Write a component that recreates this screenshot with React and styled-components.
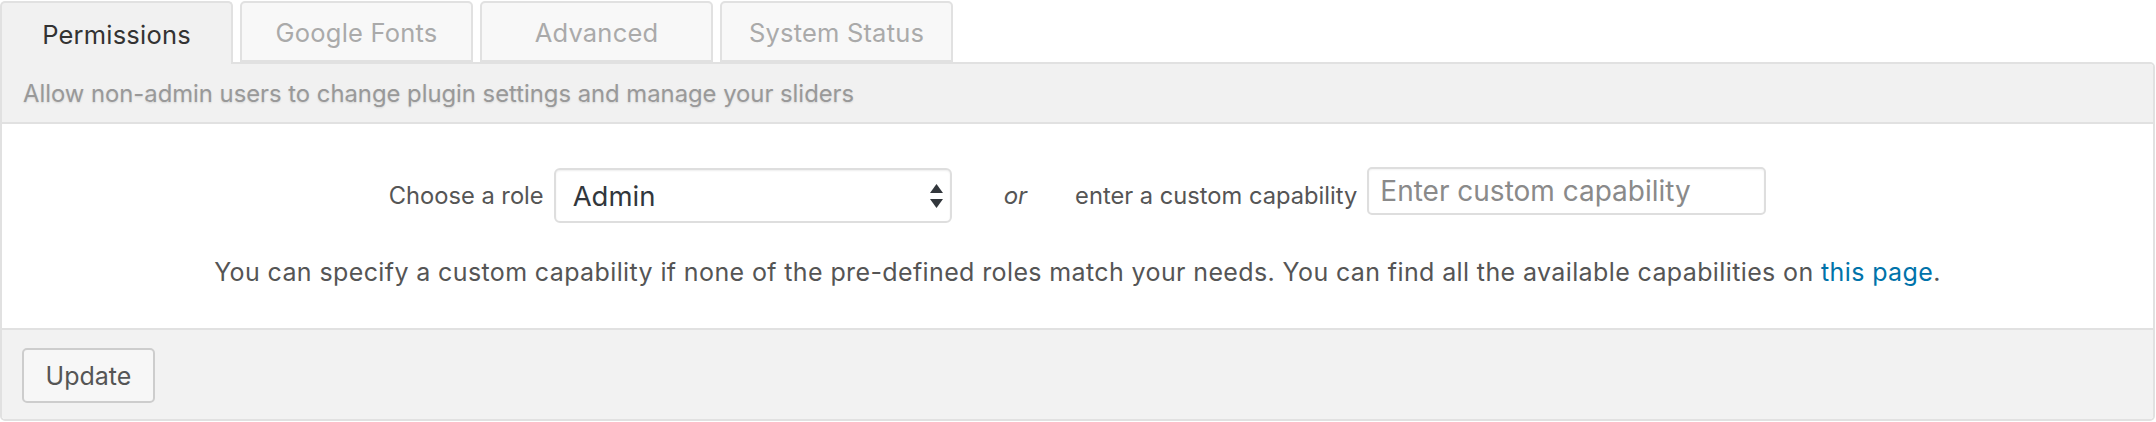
import React from 'react';
import styled, { createGlobalStyle } from 'styled-components';

const BORDER = '#e1e1e1';
const FONT = 'Inter, "Noto Sans", "Liberation Sans", sans-serif';

const GlobalStyle = createGlobalStyle`
  html, body {
    margin: 0;
    padding: 0;
    background: #fff;
  }
  body {
    font-family: ${FONT};
    -webkit-font-smoothing: antialiased;
  }
`;

const Wrap = styled.div`
  width: 2155px;
  padding-top: 1px;
`;

const TabBar = styled.div`
  display: flex;
  align-items: flex-end;
  gap: 7px;
  height: 61px;
`;

const Tab = styled.div`
  position: relative;
  z-index: ${({ active }) => (active ? 1 : 0)};
  box-sizing: border-box;
  width: 233px;
  height: ${({ active }) => (active ? '63px' : '61px')};
  margin-bottom: ${({ active }) => (active ? '-2px' : '0')};
  display: flex;
  align-items: center;
  justify-content: center;
  padding-top: 2px;
  border: 2px solid ${BORDER};
  border-bottom: ${({ active }) => (active ? 'none' : `2px solid ${BORDER}`)};
  border-radius: 5px 5px 0 0;
  background: ${({ active }) => (active ? '#f1f1f1' : '#f8f8f8')};
  color: ${({ active }) => (active ? '#333' : '#aaa')};
  font-size: 25.5px;
  letter-spacing: 0.2px;
  cursor: pointer;
`;

const Panel = styled.div`
  box-sizing: border-box;
  border: 2px solid ${BORDER};
  border-radius: 0 5px 5px 5px;
  overflow: hidden;
`;

const PanelHeader = styled.div`
  box-sizing: border-box;
  height: 60px;
  display: flex;
  align-items: center;
  padding: 0 21px;
  background: #f1f1f1;
  border-bottom: 2px solid ${BORDER};
  color: #999;
  font-size: 23.8px;
  text-shadow: 0 1px 2px rgba(0, 0, 0, 0.12);
`;

const PanelBody = styled.div`
  box-sizing: border-box;
  height: 206px;
  padding-top: 44px;
  background: #fff;
  border-bottom: 2px solid ${BORDER};
`;

const FieldRow = styled.div`
  display: flex;
  align-items: center;
  justify-content: center;
  height: 55px;
`;

const Label = styled.label`
  color: #555;
  font-size: 23.7px;
  margin-right: 10px;
  white-space: nowrap;
`;

const Or = styled.span`
  color: #555;
  font-size: 24px;
  font-style: italic;
  margin: 0 48px 0 52px;
`;

const SelectWrap = styled.div`
  position: relative;
  width: 398px;
  height: 55px;
`;

const Select = styled.select`
  appearance: none;
  -webkit-appearance: none;
  box-sizing: border-box;
  width: 100%;
  height: 100%;
  padding: 0 40px 0 17px;
  border: 2px solid #dedede;
  border-radius: 6px;
  background: #fff;
  box-shadow: inset 0 1px 2px rgba(0, 0, 0, 0.07);
  color: #32373c;
  font-family: ${FONT};
  font-size: 27.5px;
  outline: none;
`;

const Arrows = styled.svg`
  position: absolute;
  right: 9px;
  top: 16px;
  pointer-events: none;
`;

const TextInput = styled.input`
  box-sizing: border-box;
  width: 399px;
  height: 48px;
  margin-bottom: 9px;
  padding: 0 11px;
  border: 2px solid #dedede;
  border-radius: 5px;
  box-shadow: inset 0 1px 2px rgba(0, 0, 0, 0.05);
  font-family: ${FONT};
  font-size: 28px;
  color: #32373c;
  outline: none;

  &::placeholder {
    color: #8a8a8a;
  }
`;

const Hint = styled.p`
  margin: 32px 0 0;
  text-align: center;
  color: #555;
  font-size: 25px;
  letter-spacing: 0.38px;
  line-height: 34px;
`;

const Link = styled.a`
  color: #0073aa;
  text-decoration: none;
`;

const PanelFooter = styled.div`
  box-sizing: border-box;
  height: 89px;
  padding: 18px 20px 0;
  background: #f2f2f2;
`;

const Button = styled.button`
  box-sizing: border-box;
  width: 133px;
  height: 55px;
  border: 2px solid #cdcdcd;
  border-radius: 5px;
  background: #f7f7f7;
  color: #555;
  font-family: ${FONT};
  font-size: 25px;
  cursor: pointer;
`;

const tabs = ['Permissions', 'Google Fonts', 'Advanced', 'System Status'];

export default function App() {
  return (
    <Wrap>
      <GlobalStyle />
      <TabBar>
        {tabs.map((t, i) => (
          <Tab key={t} active={i === 0}>
            {t}
          </Tab>
        ))}
      </TabBar>
      <Panel>
        <PanelHeader>
          Allow non-admin users to change plugin settings and manage your sliders
        </PanelHeader>
        <PanelBody>
          <FieldRow>
            <Label>Choose a role</Label>
            <SelectWrap>
              <Select defaultValue="admin">
                <option value="admin">Admin</option>
                <option value="editor">Editor</option>
                <option value="author">Author</option>
              </Select>
              <Arrows width="13" height="24" viewBox="0 0 13 24">
                <path d="M6.5 0 L13 9 L0 9 Z" fill="#32373c" />
                <path d="M0 15 L13 15 L6.5 24 Z" fill="#32373c" />
              </Arrows>
            </SelectWrap>
            <Or>or</Or>
            <Label>enter a custom capability</Label>
            <TextInput placeholder="Enter custom capability" />
          </FieldRow>
          <Hint>
            You can specify a custom capability if none of the pre-defined roles
            match your needs. You can find all the available capabilities on{' '}
            <Link href="#">this page</Link>.
          </Hint>
        </PanelBody>
        <PanelFooter>
          <Button>Update</Button>
        </PanelFooter>
      </Panel>
    </Wrap>
  );
}
